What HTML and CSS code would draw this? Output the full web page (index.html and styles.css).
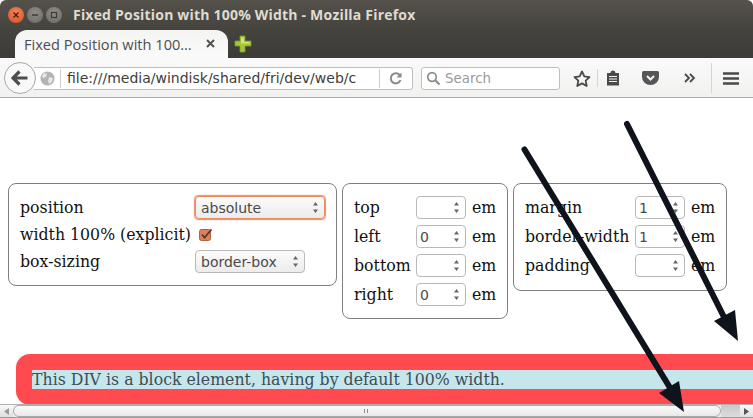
FILE: index.html
```html
<!DOCTYPE html>
<html lang="en">
<head>
<meta charset="utf-8">
<title>Fixed Position with 100% Width</title>
<link rel="stylesheet" href="styles.css">
</head>
<body>
<div class="window">
  <header class="titlebar">
    <div class="winbtns">
      <span class="winbtn close"><svg width="10" height="10" viewBox="0 0 10 10"><path d="M2.5 2.5l5 5M7.500 2.500l-5 5" stroke="#5a1a08" stroke-width="1.500"/></svg></span>
      <span class="winbtn"><svg width="10" height="10" viewBox="0 0 10 10"><path d="M2 5h6" stroke="#3c3b37" stroke-width="1.500"/></svg></span>
      <span class="winbtn"><svg width="10" height="10" viewBox="0 0 10 10"><rect x="2.500" y="2.500" width="5" height="5" fill="none" stroke="#3c3b37" stroke-width="1.200"/></svg></span>
    </div>
    <div class="wintitle">Fixed Position with 100% Width - Mozilla Firefox</div>
  </header>
  <div class="tabstrip">
    <div class="tab">
      <span class="tabtitle">Fixed Position with 100…</span>
      <svg class="tabclose" width="9" height="9" viewBox="0 0 9 9"><path d="M1 1l7 7M8 1l-7 7" stroke="#55534f" stroke-width="2"/></svg>
    </div>
    <svg class="newtab" width="18" height="18" viewBox="0 0 18 18"><path d="M6 1h5v5h6v5h-6v6H6v-6H1V6h5z" fill="#a4c639" stroke="#7d9a2c" stroke-width=".8"/><path d="M7 2.500h3V7h5.500v1.500H7z" fill="#cfe37a"/></svg>
  </div>
  <nav class="toolbar">
    <span class="backbtn"><svg width="18" height="16" viewBox="0 0 18 16"><path d="M8.500 1.500L2 8l6.500 6.500M2.500 8H16.500" fill="none" stroke="#4e4e4e" stroke-width="3.200"/></svg></span>
    <div class="urlbar">
      <svg class="globe" width="15" height="15" viewBox="0 0 15 15"><circle cx="7.500" cy="7.500" r="7" fill="#b3b3b3"/><path d="M4 2l3 1-1 3-3 1-1-2zM9 6l4 1-1 4-3 2-1-3z" fill="#e6e6e6"/></svg>
      <span class="urlsep"></span>
      <span class="urltext">file:///media/windisk/shared/fri/dev/web/c</span>
      <span class="urlsep reloadsep"></span>
      <svg class="reload" width="13" height="13" viewBox="0 0 13 13"><path d="M11 3.600A5 5 0 1 0 11.500 8" fill="none" stroke="#8a8a8a" stroke-width="2"/><path d="M12.500 .5v5h-5z" fill="#8a8a8a"/></svg>
    </div>
    <div class="searchbar">
      <svg width="15" height="15" viewBox="0 0 15 15"><circle cx="6" cy="6" r="4.300" fill="none" stroke="#8c8c8c" stroke-width="1.700"/><path d="M9.200 9.200l4.300 4.300" stroke="#8c8c8c" stroke-width="2.200"/></svg>
      <span>Search</span>
    </div>
    <div class="tools">
      <svg class="t-star" width="18" height="17" viewBox="0 0 18 17"><path d="M9 1.500l2.300 4.900 5.200.7-3.800 3.600 1 5.300L9 13.400l-4.700 2.600 1-5.300L1.500 7.100l5.200-.7z" fill="none" stroke="#4a4a4a" stroke-width="1.800" stroke-linejoin="round"/></svg>
      <span class="toolsep s1"></span>
      <svg class="t-list" width="14" height="16" viewBox="0 0 14 16"><path d="M1 3h3.500a2.500 2.500 0 0 1 5 0H13v12.500H1z" fill="#4a4a4a"/><path d="M3 6.500h8M3 9h8M3 11.500h8" stroke="#f5f5f4" stroke-width="1"/></svg>
      <svg class="t-pocket" width="17" height="14" viewBox="0 0 17 14"><path d="M1.500 0h14A1.500 1.500 0 0 1 17 1.500V6a8.500 8 0 0 1-17 0V1.500A1.500 1.500 0 0 1 1.500 0z" fill="#56565a"/><path d="M5 5l3.500 3.500L12 5" fill="none" stroke="#f5f5f4" stroke-width="2"/></svg>
      <svg class="t-more" width="12" height="10" viewBox="0 0 12 10"><path d="M1 1l4 4-4 4M6 1l4 4-4 4" fill="none" stroke="#4a4a4a" stroke-width="1.800"/></svg>
      <span class="toolsep s2"></span>
      <svg class="t-menu" width="16" height="13" viewBox="0 0 16 13"><path d="M0 1.500h16M0 6.500h16M0 11.500h16" stroke="#4a4a4a" stroke-width="2.400"/></svg>
    </div>
  </nav>
  <main class="page">
    <div class="panels">
      <form class="panel panel-a">
        <label>position</label>
        <span class="select focused">absolute<svg class="updown" width="7" height="13" viewBox="0 0 7 13"><path d="M3.500 1L6 4.500H1zM3.500 12L1 8.500h5z" fill="#666"/></svg></span>
        <label>width 100% (explicit)</label>
        <span class="check"><svg width="14" height="13" viewBox="0 0 14 13"><rect x=".5" y="1.500" width="11" height="11" rx="2" fill="#e0805a" stroke="#b5603c"/><path d="M3 6.500l2.500 3L12.500 1.500" fill="none" stroke="#5a3526" stroke-width="1.800"/></svg></span>
        <label>box-sizing</label>
        <span class="select short">border-box<svg class="updown" width="7" height="13" viewBox="0 0 7 13"><path d="M3.500 1L6 4.500H1zM3.500 12L1 8.500h5z" fill="#666"/></svg></span>
      </form>
      <form class="panel panel-b">
        <label>top</label><span class="num"><svg class="updown" width="7" height="13" viewBox="0 0 7 13"><path d="M3.500 1L6 4.500H1zM3.500 12L1 8.500h5z" fill="#666"/></svg></span><span>em</span>
        <label>left</label><span class="num">0<svg class="updown" width="7" height="13" viewBox="0 0 7 13"><path d="M3.500 1L6 4.500H1zM3.500 12L1 8.500h5z" fill="#666"/></svg></span><span>em</span>
        <label>bottom</label><span class="num"><svg class="updown" width="7" height="13" viewBox="0 0 7 13"><path d="M3.500 1L6 4.500H1zM3.500 12L1 8.500h5z" fill="#666"/></svg></span><span>em</span>
        <label>right</label><span class="num">0<svg class="updown" width="7" height="13" viewBox="0 0 7 13"><path d="M3.500 1L6 4.500H1zM3.500 12L1 8.500h5z" fill="#666"/></svg></span><span>em</span>
      </form>
      <form class="panel panel-c">
        <label>margin</label><span class="num">1<svg class="updown" width="7" height="13" viewBox="0 0 7 13"><path d="M3.500 1L6 4.500H1zM3.500 12L1 8.500h5z" fill="#666"/></svg></span><span>em</span>
        <label>border-width</label><span class="num">1<svg class="updown" width="7" height="13" viewBox="0 0 7 13"><path d="M3.500 1L6 4.500H1zM3.500 12L1 8.500h5z" fill="#666"/></svg></span><span>em</span>
        <label>padding</label><span class="num"><svg class="updown" width="7" height="13" viewBox="0 0 7 13"><path d="M3.500 1L6 4.500H1zM3.500 12L1 8.500h5z" fill="#666"/></svg></span><span>em</span>
      </form>
    </div>
    <div class="block"><div class="block-inner">This DIV is a block element, having by default 100% width.</div></div>
  </main>
  <div class="hscroll">
    <span class="sbtn"><svg width="5" height="7" viewBox="0 0 5 7"><path d="M5 0v7L0 3.500z" fill="#999"/></svg></span>
    <span class="thumb"><span class="grip"></span></span>
    <span class="track"></span>
    <span class="sbtn right"><svg width="5" height="7" viewBox="0 0 5 7"><path d="M0 0v7l5-3.500z" fill="#555"/></svg></span>
  </div>
  <svg class="arrows" width="753" height="418" viewBox="0 0 753 418">
    <path d="M524.500 149.500L672 391" stroke="#0e131c" stroke-width="6" stroke-linecap="round" fill="none"/>
    <path d="M684 412L679 381 659 393z" fill="#0e131c"/>
    <path d="M627 124L726 321" stroke="#0e131c" stroke-width="6" stroke-linecap="round" fill="none"/>
    <path d="M738 341L735 310 714 321z" fill="#0e131c"/>
  </svg>
</div>
</body>
</html>
```
FILE: styles.css
```css
* { box-sizing: border-box; }
html, body { margin: 0; padding: 0; height: 100%; overflow: hidden; background: #fff; }
.window { position: relative; width: 753px; height: 418px; display: flex; flex-direction: column; overflow: hidden; font-family: "DejaVu Sans", sans-serif; }

.titlebar { height: 29px; flex: none; display: flex; align-items: center; padding: 0 0 0 8px; background: linear-gradient(#55524c, #45433e); border-radius: 6px 6px 0 0; }
.winbtns { display: flex; gap: 3px; width: 65px; flex: none; }
.winbtn { width: 16px; height: 16px; border-radius: 50%; display: flex; align-items: center; justify-content: center; background: radial-gradient(circle at 50% 35%, #8f8d86, #6b6963); }
.winbtn.close { background: radial-gradient(circle at 50% 35%, #f08a5d, #d8491f); }
.wintitle { font-family: "Open Sans", sans-serif; font-weight: 700; font-size: 14px; color: #dfdbd2; letter-spacing: .2px; white-space: nowrap; }

.tabstrip { height: 29px; flex: none; display: flex; align-items: flex-end; padding-left: 15px; background: linear-gradient(#45433e, #3c3b37); }
.tab { width: 213px; height: 28px; display: flex; align-items: center; justify-content: space-between; padding: 0 13px 1px 9px; background: linear-gradient(#f4f4f3, #fafafa); border-radius: 12px 12px 0 0; }
.tabtitle { font-family: "Open Sans", sans-serif; font-size: 14.6px; color: #4d4d4d; white-space: nowrap; }
.tabclose { flex: none; }
.newtab { flex: none; margin: 0 0 5px 6px; }

.toolbar { height: 40px; flex: none; display: flex; align-items: center; padding: 1px 0 0 4px; background: linear-gradient(#fafafa, #f1f1f0); border-bottom: 1px solid #a9a9a9; position: relative; }
.backbtn { width: 32px; height: 32px; flex: none; border-radius: 50%; border: 1px solid #a8a8a8; background: #f9f9f9; display: flex; align-items: center; justify-content: center; position: relative; z-index: 1; }
.urlbar { width: 379px; height: 23px; flex: none; margin-left: -2px; display: flex; align-items: center; background: #fff; border: 1px solid #bfbfbf; border-left: none; border-radius: 0 3px 3px 0; padding-left: 6px; }
.globe { flex: none; }
.urlsep { width: 1px; height: 19px; background: #cfcfcf; margin: 0 6px 0 5px; flex: none; }
.urltext { font-size: 14px; color: #3d3d3d; width: 289px; overflow: hidden; white-space: nowrap; flex: none; }
.reloadsep { margin: 0 0 0 23px; }
.reload { margin-left: 9px; flex: none; }
.searchbar { width: 139px; height: 23px; flex: none; margin-left: 8px; display: flex; align-items: center; gap: 4px; padding-left: 4px; background: #fff; border: 1px solid #bfbfbf; border-radius: 3px; font-size: 13.4px; color: #9a9a9a; }
.tools { flex: 1; height: 100%; display: flex; align-items: center; position: relative; }
.t-star { margin-left: 13px; flex: none; }
.toolsep { width: 1px; background: #d5d5d5; flex: none; }
.toolsep.s1 { height: 18px; margin-left: 6px; }
.t-list { margin-left: 8px; flex: none; }
.t-pocket { margin-left: 22px; flex: none; }
.t-more { margin-left: 25px; flex: none; }
.toolsep.s2 { height: 30px; margin-left: 15px; }
.t-menu { margin-left: 11px; flex: none; }

.page { flex: 1; min-height: 0; overflow: hidden; font-family: "DejaVu Serif", serif; font-size: 15.75px; color: #111; padding: 85px 0 0 8px; }
.panels { display: flex; align-items: flex-start; gap: 5px; height: 136px; }
.panel { margin: 0; border: 1px solid #7f7f7f; border-radius: 8px; display: grid; align-items: center; }
.panel-a { width: 329px; height: 103px; padding: 10px 11px; grid-template-columns: 175px 1fr; grid-auto-rows: 27px; }
.panel-b { width: 166px; height: 136px; padding: 9px 11px 10px; grid-template-columns: 62px 50px auto; grid-auto-rows: 29px; column-gap: 0; }
.panel-c { width: 214px; height: 108px; padding: 9px 11px 10px; grid-template-columns: 110px 50px auto; grid-auto-rows: 29px; }
.panel-b > span:nth-child(3n), .panel-c > span:nth-child(3n) { margin-left: 6px; }
label { white-space: nowrap; }

.select, .num { position: relative; display: block; height: 23px; line-height: 22px; font-family: "DejaVu Sans", sans-serif; font-size: 14px; color: #4a4a4a; border: 1px solid #b9b9b9; border-radius: 4px; }
.select { padding-left: 5px; background: linear-gradient(#fbfbfb, #ececec); }
.select.focused { border: 1px solid #ee8a60; box-shadow: 0 0 1px 0.5px #ee8a60; }
.select.short { width: 110px; }
.num { width: 50px; padding-left: 3px; background: #fff; }
.updown { position: absolute; right: 5px; top: 4px; }
.check { display: block; height: 13px; padding-left: 4px; line-height: 0; }

.block { width: 800px; margin: 35px 0 0 8px; padding: 16px; background: #ff4a4f; border-radius: 14px 0 0 14px; }
.block-inner { height: 19px; line-height: 19px; background: #c5e7ec; color: #3e4d58; white-space: nowrap; }

.hscroll { height: 14px; flex: none; display: flex; align-items: stretch; background: #eee; border-top: 1px solid #b0b0b0; border-bottom: 1px solid #9c9c9c; position: relative; }
.sbtn { width: 13px; flex: none; display: flex; align-items: center; justify-content: center; background: linear-gradient(#fafafa, #dedede); }
.sbtn.right { width: 13px; }
.thumb { width: 708px; flex: none; display: flex; align-items: center; justify-content: center; background: linear-gradient(#fbfbfb, #e9e9e9); border: 1px solid #a9a9a9; border-radius: 7px; }
.grip { width: 6px; height: 4px; background: repeating-linear-gradient(90deg, #8c8c8c 0 1px, transparent 1px 3px); }
.track { flex: 1; background: linear-gradient(#c9c9c9, #dcdcdc); }

.arrows { position: absolute; left: 0; top: 0; pointer-events: none; }
```
